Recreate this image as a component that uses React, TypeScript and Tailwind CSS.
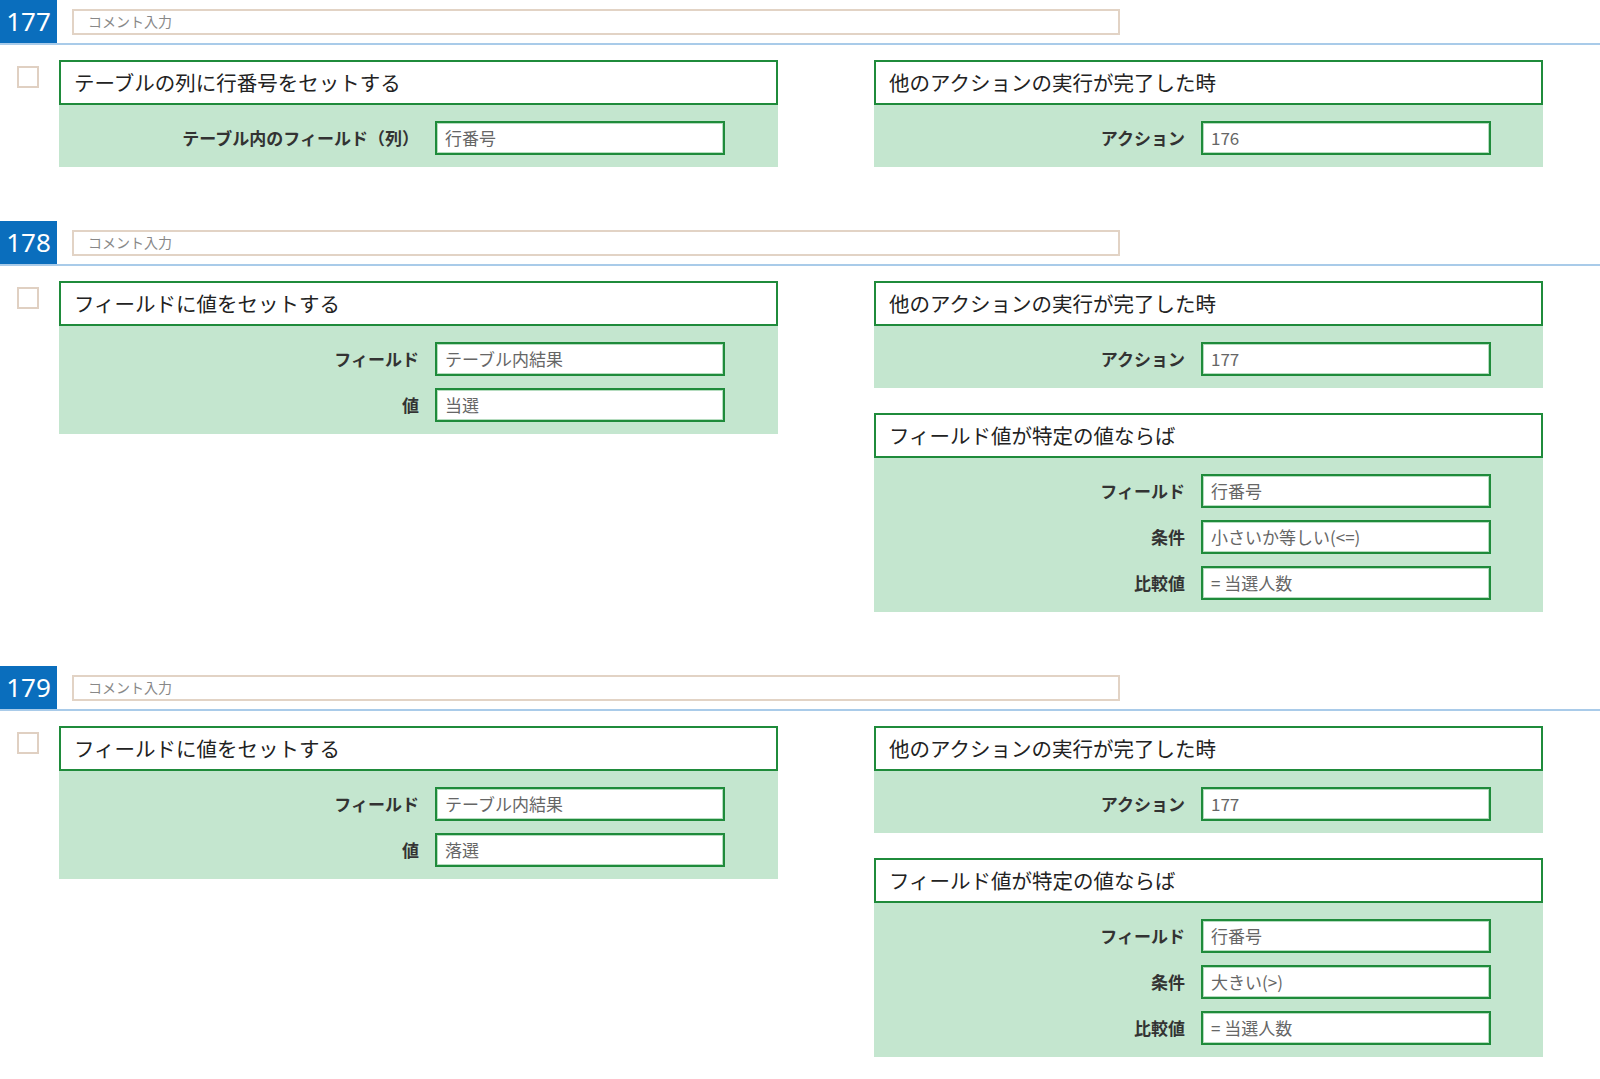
import React from "react";

type Row = { label: string; value: string };
type Card = { title: string; rows: Row[] };
type Section = { no: string; left: Card; right: Card[] };

const sections: Section[] = [
  {
    no: "177",
    left: { title: "テーブルの列に行番号をセットする", rows: [{ label: "テーブル内のフィールド（列）", value: "行番号" }] },
    right: [{ title: "他のアクションの実行が完了した時", rows: [{ label: "アクション", value: "176" }] }],
  },
  {
    no: "178",
    left: {
      title: "フィールドに値をセットする",
      rows: [
        { label: "フィールド", value: "テーブル内結果" },
        { label: "値", value: "当選" },
      ],
    },
    right: [
      { title: "他のアクションの実行が完了した時", rows: [{ label: "アクション", value: "177" }] },
      {
        title: "フィールド値が特定の値ならば",
        rows: [
          { label: "フィールド", value: "行番号" },
          { label: "条件", value: "小さいか等しい(<=)" },
          { label: "比較値", value: "= 当選人数" },
        ],
      },
    ],
  },
  {
    no: "179",
    left: {
      title: "フィールドに値をセットする",
      rows: [
        { label: "フィールド", value: "テーブル内結果" },
        { label: "値", value: "落選" },
      ],
    },
    right: [
      { title: "他のアクションの実行が完了した時", rows: [{ label: "アクション", value: "177" }] },
      {
        title: "フィールド値が特定の値ならば",
        rows: [
          { label: "フィールド", value: "行番号" },
          { label: "条件", value: "大きい(>)" },
          { label: "比較値", value: "= 当選人数" },
        ],
      },
    ],
  },
];

function CardView({ card, side }: { card: Card; side: "left" | "right" }) {
  return (
    <div className={side === "left" ? "w-[719px]" : "w-[669px]"}>
      <div className="h-[45px] border-2 border-[#1f8b3b] bg-white flex items-center pl-[13px] text-[20.5px] text-[#222]">
        {card.title}
      </div>
      <div className="bg-[#c4e6cf] pt-[16px] pb-[12px] flex flex-col gap-[12px]">
        {card.rows.map((r, i) => (
          <div key={i} className="flex items-center">
            <div
              className={
                (side === "left" ? "w-[376px]" : "w-[327px]") +
                " pr-[16px] text-right font-bold text-[17px] text-[#333]"
              }
            >
              {r.label}
            </div>
            <div className="w-[290px] h-[34px] border-2 border-[#1f8b3b] bg-white shadow-[inset_0_0_0_1px_#b5dcbf] flex items-center pl-[8px] text-[17px] text-[#666]">
              {r.value}
            </div>
          </div>
        ))}
      </div>
    </div>
  );
}

export default function App() {
  return (
    <div
      className="w-[1600px] min-h-[1079px] bg-white"
      style={{ fontFamily: '"Noto Sans CJK JP", "Noto Sans", sans-serif' }}
    >
      {sections.map((s, idx) => (
        <div key={s.no} className={idx < sections.length - 1 ? "mb-[54px]" : ""}>
          <div className="flex items-center h-[45px] border-b-2 border-[#a9cbe9]">
            <div
              className="w-[57px] h-[43px] bg-[#0a6ebd] text-white text-[26px] flex items-center justify-center"
              style={{ fontFamily: '"Noto Sans", sans-serif' }}
            >
              {s.no}
            </div>
            <div className="ml-[15px] w-[1048px] h-[26px] border-2 border-[#e2d3c5] flex items-center pl-[14px] text-[14px] text-[#888]">
              コメント入力
            </div>
          </div>
          <div className="flex pt-[15px]">
            <div className="w-[59px] pl-[17px] pt-[6px]">
              <div className="w-[22px] h-[22px] border-2 border-[#e0d0c2] bg-white" />
            </div>
            <CardView card={s.left} side="left" />
            <div className="ml-[96px] flex flex-col gap-[25px]">
              {s.right.map((c, i) => (
                <CardView key={i} card={c} side="right" />
              ))}
            </div>
          </div>
        </div>
      ))}
    </div>
  );
}
